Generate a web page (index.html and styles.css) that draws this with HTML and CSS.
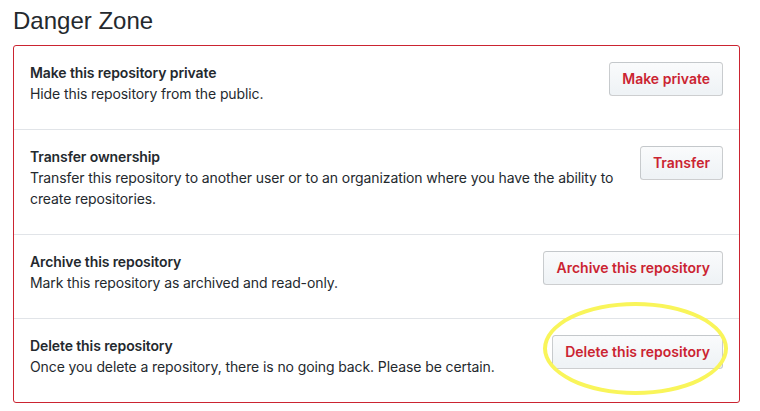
FILE: index.html
```html
<!DOCTYPE html>
<html lang="en">
<head>
<meta charset="utf-8">
<title>Danger Zone</title>
<link rel="stylesheet" href="styles.css">
</head>
<body>
<div class="page">
  <h2 class="heading">Danger Zone</h2>
  <div class="box">
    <div class="row">
      <div class="info">
        <strong class="row-title">Make this repository private</strong>
        <p class="row-desc">Hide this repository from the public.</p>
      </div>
      <button class="btn">Make private</button>
    </div>
    <div class="row">
      <div class="info">
        <strong class="row-title">Transfer ownership</strong>
        <p class="row-desc">Transfer this repository to another user or to an organization where you have the ability to create repositories.</p>
      </div>
      <button class="btn">Transfer</button>
    </div>
    <div class="row">
      <div class="info">
        <strong class="row-title">Archive this repository</strong>
        <p class="row-desc">Mark this repository as archived and read-only.</p>
      </div>
      <button class="btn">Archive this repository</button>
    </div>
    <div class="row">
      <div class="info">
        <strong class="row-title">Delete this repository</strong>
        <p class="row-desc">Once you delete a repository, there is no going back. Please be certain.</p>
      </div>
      <div class="btn-wrap">
        <button class="btn">Delete this repository</button>
        <span class="highlight"></span>
      </div>
    </div>
  </div>
</div>
</body>
</html>
```
FILE: styles.css
```css
* { box-sizing: border-box; }
html, body { margin: 0; padding: 0; background: #fff; }
body {
  font-family: Inter, "Liberation Sans", Arial, sans-serif;
  color: #24292e;
  font-size: 14px;
  line-height: 1.5;
  letter-spacing: -0.1px;
}
.page {
  padding: 4px 20px 0 13px;
}
.heading {
  margin: 0 0 7px;
  font-family: "Liberation Sans", Arial, sans-serif;
  font-size: 24px;
  font-weight: 400;
  line-height: 34px;
  letter-spacing: 0;
}
.box {
  border: 1px solid #cb2431;
  border-radius: 3px;
}
.row {
  display: flex;
  align-items: flex-start;
  justify-content: space-between;
  gap: 20px;
  padding: 16px 16px 15px;
  border-top: 1px solid #e1e4e8;
}
.row:first-child { border-top: 0; }
.info { flex: 1; min-width: 0; }
.row-title {
  display: block;
  font-weight: 600;
  line-height: 21px;
}
.row-desc {
  margin: 0 0 10px;
  line-height: 21px;
}
.btn {
  flex: none;
  font-family: inherit;
  font-size: 14px;
  font-weight: 600;
  line-height: 20px;
  letter-spacing: 0;
  padding: 6px 12px;
  color: #cb2431;
  background: linear-gradient(180deg, #fafbfc, #eff3f6 90%);
  border: 1px solid rgba(27, 31, 35, 0.2);
  border-radius: 3.5px;
  height: 34px;
}
.btn-wrap {
  position: relative;
  flex: none;
}
.highlight {
  position: absolute;
  right: -5px;
  top: -33px;
  width: 185px;
  height: 93px;
  border: 4px solid #f9f55a;
  border-radius: 50%;
  pointer-events: none;
}
```
